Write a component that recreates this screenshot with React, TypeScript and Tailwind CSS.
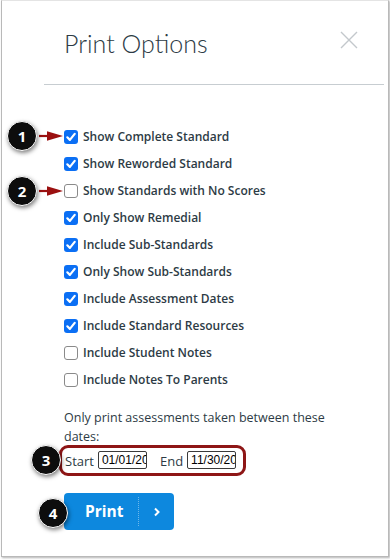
import React from "react";

const OPTIONS: { label: string; checked: boolean }[] = [
  { label: "Show Complete Standard", checked: true },
  { label: "Show Reworded Standard", checked: true },
  { label: "Show Standards with No Scores", checked: false },
  { label: "Only Show Remedial", checked: true },
  { label: "Include Sub-Standards", checked: true },
  { label: "Only Show Sub-Standards", checked: true },
  { label: "Include Assessment Dates", checked: true },
  { label: "Include Standard Resources", checked: true },
  { label: "Include Student Notes", checked: false },
  { label: "Include Notes To Parents", checked: false },
];

function Box({ checked }: { checked: boolean }) {
  if (!checked) {
    return <span className="w-[14px] h-[14px] rounded-[3px] border border-[#8a8a8a] bg-white shrink-0" />;
  }
  return (
    <span className="w-[14px] h-[14px] rounded-[3px] bg-[#0b6ff4] shrink-0 flex items-center justify-center">
      <svg width="14" height="14" viewBox="0 0 14 14">
        <path d="M3.3 7.3 L5.9 9.9 L10.7 3.9" fill="none" stroke="#fff" strokeWidth="2.2" strokeLinecap="round" strokeLinejoin="round" />
      </svg>
    </span>
  );
}

function Callout({ n, x, y }: { n: number; x: number; y: number }) {
  return (
    <div
      className="absolute w-[30px] h-[30px] rounded-full bg-[#0d0d0d] border-[1.5px] border-white shadow-[1px_2px_4px_rgba(0,0,0,0.5)] flex items-center justify-center text-white text-[15px] font-bold font-['Open_Sans',sans-serif]"
      style={{ left: x - 15, top: y - 15 }}
    >
      {n}
    </div>
  );
}

function Arrow({ y }: { y: number }) {
  return (
    <svg className="absolute" style={{ left: 38, top: y - 6 }} width="26" height="12" viewBox="0 0 26 12">
      <path d="M1 6 L12 6" stroke="#9b1010" strokeWidth="2.2" />
      <path d="M9 1.2 L25 6 L9 10.8 Z" fill="#9b1010" />
    </svg>
  );
}

export default function App() {
  return (
    <div className="relative w-[390px] h-[560px] bg-white overflow-hidden font-['Lato',sans-serif] text-[#2d3b45]">
      <div className="ml-[1px] w-[388px] h-[557px] border border-[#b9b9b9] border-t-[#e4e4e4] bg-white shadow-[1px_1px_2px_rgba(0,0,0,0.3)]">
        <div className="flex items-start justify-between pl-[62px] pr-[30px] pt-[26px] h-[83px]">
          <h1 className="text-[25px] font-light leading-[32px] text-[#2d3b45]">Print Options</h1>
          <svg className="mt-[4px]" width="18" height="18" viewBox="0 0 18 18">
            <path d="M1 1 L17 17 M17 1 L1 17" stroke="#c3c8cc" strokeWidth="1.4" />
          </svg>
        </div>
        <div className="ml-[42px] mr-[4px] border-b border-[#c7cdd1]" />

        <div className="pl-[62px] pt-[38px] flex flex-col">
          {OPTIONS.map((o) => (
            <label key={o.label} className="h-[27px] flex items-center gap-[5px] text-[12px] font-semibold font-['Open_Sans',sans-serif]">
              <Box checked={o.checked} />
              <span>{o.label}</span>
            </label>
          ))}

          <p className="mt-[15px] pr-[40px] text-[12.5px] leading-[19px] font-['Open_Sans',sans-serif]">
            Only print assessments taken between these dates:
          </p>

          <div className="mt-[4px] flex items-end h-[19px] text-[13px] font-['Open_Sans',sans-serif]">
            <span className="ml-[1px] leading-[15px]">Start</span>
            <input
              readOnly
              value="01/01/2017"
              className="ml-[4px] w-[49px] h-[18px] border border-[#3a3a3a] rounded-[2px] pl-[3px] text-[12px] font-['Liberation_Sans',sans-serif] text-black outline-none"
            />
            <span className="ml-[13px] mr-[4px] leading-[15px]">End</span>
            <input
              readOnly
              value="11/30/2017"
              className="w-[49px] h-[18px] border border-[#3a3a3a] rounded-[2px] pl-[3px] text-[12px] font-['Liberation_Sans',sans-serif] text-black outline-none"
            />
          </div>

          <button className="mt-[24px] w-[110px] h-[37px] rounded-[4px] bg-[#0d88de] flex items-center text-white font-['Open_Sans',sans-serif]">
            <span className="pl-[21px] pr-[15px] text-[15.5px] font-bold">Print</span>
            <span className="h-[29px] border-l border-dotted border-white/40" />
            <span className="flex-1 flex items-center justify-center">
              <svg width="8" height="10" viewBox="0 0 8 10">
                <path d="M2 1.5 L5.5 5 L2 8.5" fill="none" stroke="#fff" strokeWidth="2" />
              </svg>
            </span>
          </button>
        </div>
      </div>

      <div className="absolute left-[59px] top-[445px] w-[187px] h-[31px] border-[3px] border-[#8e1616] rounded-[9px]" />
      <Arrow y={136} />
      <Arrow y={191} />
      <Callout n={1} x={22} y={136} />
      <Callout n={2} x={22} y={191} />
      <Callout n={3} x={46} y={460} />
      <Callout n={4} x={53} y={513} />
    </div>
  );
}
